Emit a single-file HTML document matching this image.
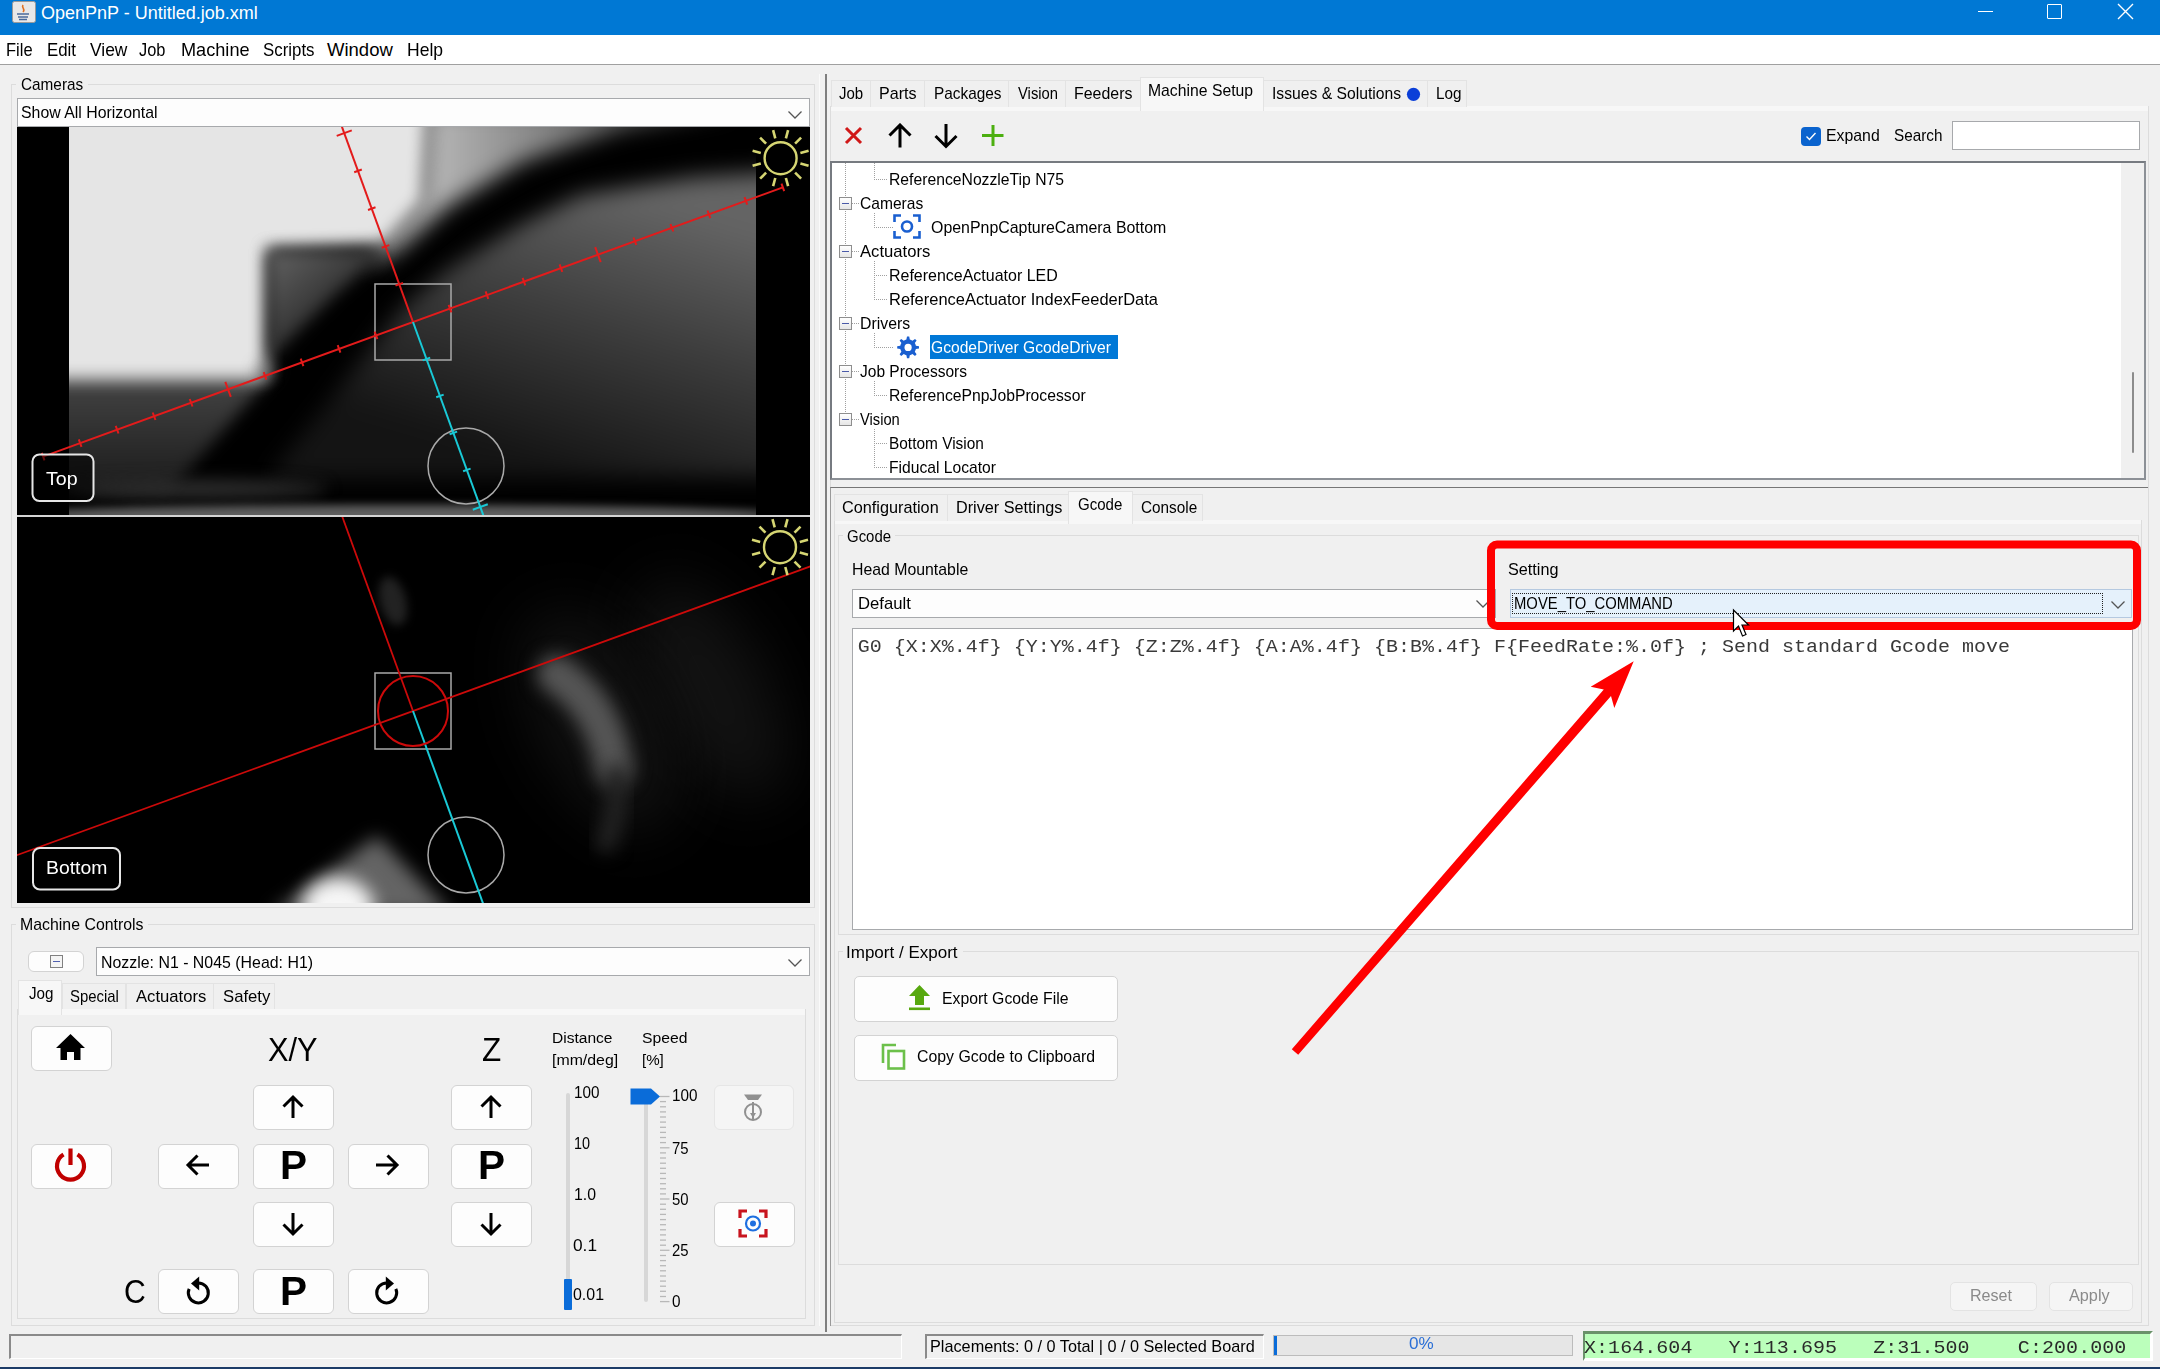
<!DOCTYPE html><html><head><meta charset="utf-8"><style>
html,body{margin:0;padding:0;width:2160px;height:1369px;overflow:hidden;background:#F0F0F0;position:relative}
.t{position:absolute;white-space:pre;line-height:normal}
</style></head><body>
<div style="position:absolute;left:0px;top:0px;width:2160px;height:1369px;background:#F0F0F0"></div>
<div style="position:absolute;left:0px;top:0px;width:2160px;height:35px;background:#0078D4"></div>
<div style="position:absolute;left:0px;top:35px;width:2160px;height:29px;background:#fff"></div>
<div style="position:absolute;left:0px;top:64px;width:2160px;height:1px;background:#A0A0A0"></div>
<div class="t" style="left:41px;top:3.21px;font-size:18px;color:#fff;font-family:'Liberation Sans', sans-serif;">OpenPnP - Untitled.job.xml</div>
<svg style="position:absolute;left:12px;top:1px" width="24" height="22" viewBox="0 0 24 22"><rect x="0.5" y="0.5" width="23" height="21" rx="2" fill="#e8e8e8" stroke="#9a9a9a"/><path d="M11 4 C9 7 14 8 11 11" stroke="#e07020" stroke-width="1.6" fill="none"/><path d="M5 13 h12 M6 16 h10 M7 18.5 h8" stroke="#4a6a9a" stroke-width="1.4"/></svg>
<div style="position:absolute;left:1978px;top:11px;width:15px;height:1px;background:#fff"></div>
<div style="position:absolute;left:2047px;top:4px;width:15px;height:15px;border:1.3px solid #fff;box-sizing:border-box;border-radius:1px"></div>
<svg style="position:absolute;left:2117px;top:3px" width="18" height="18" viewBox="0 0 18 18"><path d="M1 1 L16 16 M16 1 L1 16" stroke="#fff" stroke-width="1.4"/></svg>
<div class="t" style="left:6.00px;top:39.26px;font-size:18.5px;color:#000;font-family:'Liberation Sans', sans-serif;transform:scaleX(0.8908);transform-origin:0 0;">File</div>
<div class="t" style="left:47.00px;top:39.26px;font-size:18.5px;color:#000;font-family:'Liberation Sans', sans-serif;transform:scaleX(0.9098);transform-origin:0 0;">Edit</div>
<div class="t" style="left:90.00px;top:39.26px;font-size:18.5px;color:#000;font-family:'Liberation Sans', sans-serif;transform:scaleX(0.9404);transform-origin:0 0;">View</div>
<div class="t" style="left:139.00px;top:39.26px;font-size:18.5px;color:#000;font-family:'Liberation Sans', sans-serif;transform:scaleX(0.8870);transform-origin:0 0;">Job</div>
<div class="t" style="left:180.50px;top:39.26px;font-size:18.5px;color:#000;font-family:'Liberation Sans', sans-serif;transform:scaleX(0.9803);transform-origin:0 0;">Machine</div>
<div class="t" style="left:262.50px;top:39.26px;font-size:18.5px;color:#000;font-family:'Liberation Sans', sans-serif;transform:scaleX(0.9115);transform-origin:0 0;">Scripts</div>
<div class="t" style="left:327.00px;top:39.26px;font-size:18.5px;color:#000;font-family:'Liberation Sans', sans-serif;transform:scaleX(1.0000);transform-origin:0 0;">Window</div>
<div class="t" style="left:407.00px;top:39.26px;font-size:18.5px;color:#000;font-family:'Liberation Sans', sans-serif;transform:scaleX(0.9474);transform-origin:0 0;">Help</div>
<div style="position:absolute;left:11px;top:84px;width:804px;height:824px;border:1px solid #DCDCDC;box-sizing:border-box"></div>
<div style="position:absolute;left:16px;top:74px;width:72px;height:20px;background:#F0F0F0"></div>
<div class="t" style="left:20.60px;top:74.71px;font-size:17px;color:#000;font-family:'Liberation Sans', sans-serif;transform:scaleX(0.9014);transform-origin:0 0;">Cameras</div>
<div style="position:absolute;left:17px;top:98px;width:793px;height:29px;background:#FDFDFD;border:1px solid #A7A9AC;box-sizing:border-box"></div>
<div class="t" style="left:21.40px;top:102.91px;font-size:17px;color:#000;font-family:'Liberation Sans', sans-serif;transform:scaleX(0.9324);transform-origin:0 0;">Show All Horizontal</div>
<svg style="position:absolute;left:786px;top:109px" width="18" height="12" viewBox="0 0 18 12"><path d="M2.5 2.5 L9 9 L15.5 2.5" stroke="#555" stroke-width="1.3" fill="none"/></svg>
<svg style="position:absolute;left:17px;top:127px" width="793" height="388" viewBox="17 127 793 388">
<defs>
<filter id="b4" color-interpolation-filters="sRGB" x="-150%" y="-150%" width="400%" height="400%"><feGaussianBlur stdDeviation="4"/></filter>
<filter id="b8" color-interpolation-filters="sRGB" x="-150%" y="-150%" width="400%" height="400%"><feGaussianBlur stdDeviation="8"/></filter>
<filter id="b11" color-interpolation-filters="sRGB" x="-150%" y="-150%" width="400%" height="400%"><feGaussianBlur stdDeviation="11"/></filter>
<filter id="b14" color-interpolation-filters="sRGB" x="-150%" y="-150%" width="400%" height="400%"><feGaussianBlur stdDeviation="14"/></filter>
<filter id="b22" color-interpolation-filters="sRGB" x="-150%" y="-150%" width="400%" height="400%"><feGaussianBlur stdDeviation="22"/></filter>
<linearGradient id="gR" gradientUnits="userSpaceOnUse" x1="620" y1="70" x2="540" y2="345"><stop offset="0" stop-color="#646464"/><stop offset="0.45" stop-color="#3E3E3E"/><stop offset="1" stop-color="#141414"/></linearGradient>
<linearGradient id="gL" gradientUnits="userSpaceOnUse" x1="0" y1="250" x2="0" y2="360"><stop offset="0" stop-color="#444"/><stop offset="1" stop-color="#1c1c1c"/></linearGradient>
<linearGradient id="gN" gradientUnits="userSpaceOnUse" x1="255" y1="125" x2="320" y2="200"><stop offset="0" stop-color="#626262"/><stop offset="1" stop-color="#262626"/></linearGradient>
<linearGradient id="gT" gradientUnits="userSpaceOnUse" x1="400" y1="0" x2="620" y2="0"><stop offset="0" stop-color="#BDBDBD"/><stop offset="1" stop-color="#5A5A5A"/></linearGradient>
<clipPath id="cT"><rect x="17" y="127" width="793" height="388"/></clipPath>
</defs>
<g clip-path="url(#cT)">
<rect x="17" y="127" width="793" height="388" fill="#000"/>
<g transform="translate(17,127)">
<polygon points="10,240 262,240 152,365 10,365" fill="url(#gL)" filter="url(#b8)"/>
<polygon points="386,180 431,142 505,97 564,68 678,50 770,44 770,350 250,352" fill="url(#gR)" filter="url(#b11)"/>
<polygon points="380,-20 720,-20 603,2 505,35 431,79 379,124 350,140 364,118 404,74 409,-20" fill="url(#gT)" filter="url(#b11)"/>
<polygon points="10,-20 411,-20 406,74 366,118 250,122 250,253 10,253" fill="#E5E5E5" filter="url(#b8)"/>
<polygon points="250,122 372,122 318,168 238,246 250,251" fill="url(#gN)" filter="url(#b8)"/>
<ellipse cx="180" cy="362" rx="130" ry="9" fill="#2e2e2e" filter="url(#b8)"/>
<ellipse cx="380" cy="388" rx="390" ry="10" fill="#606060" filter="url(#b4)"/>
<rect x="0" y="0" width="52" height="388" fill="#000"/>
<rect x="739" y="0" width="54" height="388" fill="#000"/>
</g>
<rect x="375" y="284" width="76" height="76" fill="none" stroke="#A9A9A9" stroke-width="1.5"/><circle cx="466" cy="466" r="38" fill="none" stroke="#A9A9A9" stroke-width="1.5"/><line x1="43.1" y1="456.6" x2="782.9" y2="187.4" stroke="#E31B1B" stroke-width="2"/><line x1="44.5" y1="460.4" x2="41.8" y2="452.9" stroke="#E31B1B" stroke-width="2"/><line x1="81.5" y1="446.9" x2="78.8" y2="439.4" stroke="#E31B1B" stroke-width="2"/><line x1="118.5" y1="433.5" x2="115.7" y2="425.9" stroke="#E31B1B" stroke-width="2"/><line x1="155.5" y1="420.0" x2="152.7" y2="412.5" stroke="#E31B1B" stroke-width="2"/><line x1="192.5" y1="406.5" x2="189.7" y2="399.0" stroke="#E31B1B" stroke-width="2"/><line x1="230.8" y1="396.8" x2="225.3" y2="381.8" stroke="#E31B1B" stroke-width="2"/><line x1="266.4" y1="379.6" x2="263.7" y2="372.1" stroke="#E31B1B" stroke-width="2"/><line x1="303.4" y1="366.1" x2="300.7" y2="358.6" stroke="#E31B1B" stroke-width="2"/><line x1="340.4" y1="352.7" x2="337.7" y2="345.2" stroke="#E31B1B" stroke-width="2"/><line x1="377.4" y1="339.2" x2="374.6" y2="331.7" stroke="#E31B1B" stroke-width="2"/><line x1="451.4" y1="312.3" x2="448.6" y2="304.8" stroke="#E31B1B" stroke-width="2"/><line x1="488.3" y1="298.8" x2="485.6" y2="291.3" stroke="#E31B1B" stroke-width="2"/><line x1="525.3" y1="285.4" x2="522.6" y2="277.9" stroke="#E31B1B" stroke-width="2"/><line x1="562.3" y1="271.9" x2="559.6" y2="264.4" stroke="#E31B1B" stroke-width="2"/><line x1="600.7" y1="262.2" x2="595.2" y2="247.2" stroke="#E31B1B" stroke-width="2"/><line x1="636.3" y1="245.0" x2="633.5" y2="237.5" stroke="#E31B1B" stroke-width="2"/><line x1="673.3" y1="231.5" x2="670.5" y2="224.0" stroke="#E31B1B" stroke-width="2"/><line x1="710.3" y1="218.1" x2="707.5" y2="210.5" stroke="#E31B1B" stroke-width="2"/><line x1="747.2" y1="204.6" x2="744.5" y2="197.1" stroke="#E31B1B" stroke-width="2"/><line x1="784.2" y1="191.1" x2="781.5" y2="183.6" stroke="#E31B1B" stroke-width="2"/><line x1="413.0" y1="322.0" x2="340.1" y2="121.8" stroke="#E31B1B" stroke-width="2"/><line x1="395.5" y1="285.6" x2="403.0" y2="282.9" stroke="#E31B1B" stroke-width="2"/><line x1="381.7" y1="247.8" x2="389.3" y2="245.1" stroke="#E31B1B" stroke-width="2"/><line x1="368.0" y1="210.0" x2="375.5" y2="207.3" stroke="#E31B1B" stroke-width="2"/><line x1="354.2" y1="172.3" x2="361.8" y2="169.5" stroke="#E31B1B" stroke-width="2"/><line x1="336.7" y1="135.9" x2="351.8" y2="130.4" stroke="#E31B1B" stroke-width="2"/><line x1="413.0" y1="322.0" x2="487.0" y2="525.4" stroke="#19C9D6" stroke-width="2"/><line x1="422.7" y1="360.4" x2="430.2" y2="357.6" stroke="#19C9D6" stroke-width="2"/><line x1="436.2" y1="397.3" x2="443.7" y2="394.6" stroke="#19C9D6" stroke-width="2"/><line x1="449.6" y1="434.3" x2="457.1" y2="431.6" stroke="#19C9D6" stroke-width="2"/><line x1="463.1" y1="471.3" x2="470.6" y2="468.6" stroke="#19C9D6" stroke-width="2"/><line x1="472.8" y1="509.7" x2="487.8" y2="504.2" stroke="#19C9D6" stroke-width="2"/><circle cx="780.6" cy="158.2" r="16" stroke="#D6D673" stroke-width="2.4" fill="none"/><line x1="800.4" y1="163.5" x2="808.6" y2="165.7" stroke="#D6D673" stroke-width="2.6"/><line x1="795.1" y1="172.7" x2="801.1" y2="178.7" stroke="#D6D673" stroke-width="2.6"/><line x1="785.9" y1="178.0" x2="788.1" y2="186.2" stroke="#D6D673" stroke-width="2.6"/><line x1="775.3" y1="178.0" x2="773.1" y2="186.2" stroke="#D6D673" stroke-width="2.6"/><line x1="766.1" y1="172.7" x2="760.1" y2="178.7" stroke="#D6D673" stroke-width="2.6"/><line x1="760.8" y1="163.5" x2="752.6" y2="165.7" stroke="#D6D673" stroke-width="2.6"/><line x1="760.8" y1="152.9" x2="752.6" y2="150.7" stroke="#D6D673" stroke-width="2.6"/><line x1="766.1" y1="143.7" x2="760.1" y2="137.7" stroke="#D6D673" stroke-width="2.6"/><line x1="775.3" y1="138.4" x2="773.1" y2="130.2" stroke="#D6D673" stroke-width="2.6"/><line x1="785.9" y1="138.4" x2="788.1" y2="130.2" stroke="#D6D673" stroke-width="2.6"/><line x1="795.1" y1="143.7" x2="801.1" y2="137.7" stroke="#D6D673" stroke-width="2.6"/><line x1="800.4" y1="152.9" x2="808.6" y2="150.7" stroke="#D6D673" stroke-width="2.6"/><rect x="32.5" y="454.5" width="61" height="46.5" rx="7" fill="rgba(0,0,0,0.55)" stroke="#E6E6E6" stroke-width="2"/></g></svg>
<div class="t" style="left:46.40px;top:467.81px;font-size:19px;color:#fff;font-family:'Liberation Sans', sans-serif;transform:scaleX(1.0318);transform-origin:0 0;">Top</div>
<div style="position:absolute;left:17px;top:515px;width:793px;height:2px;background:#D4D4D4"></div>
<svg style="position:absolute;left:17px;top:517px" width="793" height="386" viewBox="17 517 793 386">
<defs>
<filter id="c5" color-interpolation-filters="sRGB" x="-150%" y="-150%" width="400%" height="400%"><feGaussianBlur stdDeviation="5"/></filter>
<filter id="c9" color-interpolation-filters="sRGB" x="-150%" y="-150%" width="400%" height="400%"><feGaussianBlur stdDeviation="9"/></filter>
<filter id="c30" color-interpolation-filters="sRGB" x="-150%" y="-150%" width="400%" height="400%"><feGaussianBlur stdDeviation="30"/></filter>
<clipPath id="cB"><rect x="17" y="517" width="793" height="386"/></clipPath>
</defs>
<g clip-path="url(#cB)">
<rect x="17" y="517" width="793" height="386" fill="#000"/>
<ellipse cx="712" cy="690" rx="55" ry="120" transform="rotate(-28 712 690)" fill="#121212" filter="url(#c30)"/>
<ellipse cx="393" cy="601" rx="13" ry="25" transform="rotate(-15 393 601)" fill="#222" filter="url(#c5)"/>
<ellipse cx="600" cy="720" rx="60" ry="120" transform="rotate(-27 600 720)" fill="#111" filter="url(#c30)"/>
<path d="M556 674 Q604 705 614 768" stroke="#555" stroke-width="38" stroke-linecap="round" fill="none" filter="url(#c9)"/>
<path d="M616 775 Q620 810 606 842" stroke="#222" stroke-width="22" stroke-linecap="round" fill="none" filter="url(#c9)"/>
<polygon points="270,915 377,836 452,915" fill="#646464" filter="url(#c9)"/>
<ellipse cx="338" cy="908" rx="36" ry="30" fill="#F6F6F6" filter="url(#c9)"/>
<rect x="375" y="673" width="76" height="76" fill="none" stroke="#A9A9A9" stroke-width="1.5"/><circle cx="466" cy="855" r="38" fill="none" stroke="#A9A9A9" stroke-width="1.5"/><line x1="8.9" y1="858.1" x2="817.1" y2="563.9" stroke="#CC0A0A" stroke-width="1.8"/><line x1="413.0" y1="711.0" x2="339.5" y2="509.0" stroke="#CC0A0A" stroke-width="1.8"/><line x1="413.0" y1="711.0" x2="486.5" y2="913.0" stroke="#19C9D6" stroke-width="2"/><circle cx="413" cy="711" r="35" fill="none" stroke="#CC0A0A" stroke-width="2"/><circle cx="780" cy="547.2" r="16" stroke="#D6D673" stroke-width="2.4" fill="none"/><line x1="799.8" y1="552.5" x2="808.0" y2="554.7" stroke="#D6D673" stroke-width="2.6"/><line x1="794.5" y1="561.7" x2="800.5" y2="567.7" stroke="#D6D673" stroke-width="2.6"/><line x1="785.3" y1="567.0" x2="787.5" y2="575.2" stroke="#D6D673" stroke-width="2.6"/><line x1="774.7" y1="567.0" x2="772.5" y2="575.2" stroke="#D6D673" stroke-width="2.6"/><line x1="765.5" y1="561.7" x2="759.5" y2="567.7" stroke="#D6D673" stroke-width="2.6"/><line x1="760.2" y1="552.5" x2="752.0" y2="554.7" stroke="#D6D673" stroke-width="2.6"/><line x1="760.2" y1="541.9" x2="752.0" y2="539.7" stroke="#D6D673" stroke-width="2.6"/><line x1="765.5" y1="532.7" x2="759.5" y2="526.7" stroke="#D6D673" stroke-width="2.6"/><line x1="774.7" y1="527.4" x2="772.5" y2="519.2" stroke="#D6D673" stroke-width="2.6"/><line x1="785.3" y1="527.4" x2="787.5" y2="519.2" stroke="#D6D673" stroke-width="2.6"/><line x1="794.5" y1="532.7" x2="800.5" y2="526.7" stroke="#D6D673" stroke-width="2.6"/><line x1="799.8" y1="541.9" x2="808.0" y2="539.7" stroke="#D6D673" stroke-width="2.6"/><rect x="33" y="848" width="87" height="41.5" rx="7" fill="rgba(0,0,0,0.6)" stroke="#E6E6E6" stroke-width="2"/></g></svg>
<div class="t" style="left:45.60px;top:856.50px;font-size:19px;color:#fff;font-family:'Liberation Sans', sans-serif;transform:scaleX(1.0191);transform-origin:0 0;">Bottom</div>
<div style="position:absolute;left:11px;top:924px;width:804px;height:402px;border:1px solid #DCDCDC;box-sizing:border-box"></div>
<div style="position:absolute;left:16px;top:914px;width:132px;height:20px;background:#F0F0F0"></div>
<div class="t" style="left:19.50px;top:915.32px;font-size:17px;color:#000;font-family:'Liberation Sans', sans-serif;transform:scaleX(0.9338);transform-origin:0 0;">Machine Controls</div>
<div style="position:absolute;left:28px;top:951px;width:56px;height:21px;background:#FDFDFD;border:1px solid #D3D3D3;box-sizing:border-box;border-radius:5px;border-radius:6px"></div>
<div style="position:absolute;left:50px;top:955px;width:13px;height:13px;border:1.3px solid #808080;box-sizing:border-box;background:#F4F4F4"></div>
<div style="position:absolute;left:53px;top:961px;width:7px;height:1.3px;background:#5060B0"></div>
<div style="position:absolute;left:96px;top:947px;width:714px;height:29px;background:#FDFDFD;border:1px solid #A7A9AC;box-sizing:border-box"></div>
<div class="t" style="left:101.00px;top:952.51px;font-size:17px;color:#000;font-family:'Liberation Sans', sans-serif;transform:scaleX(0.9350);transform-origin:0 0;">Nozzle: N1 - N045 (Head: H1)</div>
<svg style="position:absolute;left:786px;top:957px" width="18" height="12" viewBox="0 0 18 12"><path d="M2.5 2.5 L9 9 L15.5 2.5" stroke="#555" stroke-width="1.3" fill="none"/></svg>
<div style="position:absolute;left:17px;top:1009px;width:789px;height:310px;border:1px solid #DCDCDC;box-sizing:border-box"></div>
<div style="position:absolute;left:18px;top:1009px;width:787px;height:6px;background:#F7F7F7"></div>
<div style="position:absolute;left:62px;top:983px;width:64px;height:26px;background:#F0F0F0;border:1px solid #E3E3E3;border-bottom:none;box-sizing:border-box"></div>
<div style="position:absolute;left:126px;top:983px;width:88px;height:26px;background:#F0F0F0;border:1px solid #E3E3E3;border-bottom:none;box-sizing:border-box"></div>
<div style="position:absolute;left:213px;top:983px;width:62px;height:26px;background:#F0F0F0;border:1px solid #E3E3E3;border-bottom:none;box-sizing:border-box"></div>
<div style="position:absolute;left:18px;top:980px;width:44px;height:35px;background:#F7F7F7;border:1px solid #E3E3E3;border-bottom:none;box-sizing:border-box"></div>
<div class="t" style="left:28.50px;top:983.62px;font-size:17px;color:#000;font-family:'Liberation Sans', sans-serif;transform:scaleX(0.8950);transform-origin:0 0;">Jog</div>
<div class="t" style="left:70.00px;top:986.82px;font-size:17px;color:#000;font-family:'Liberation Sans', sans-serif;transform:scaleX(0.8771);transform-origin:0 0;">Special</div>
<div class="t" style="left:136.00px;top:986.82px;font-size:17px;color:#000;font-family:'Liberation Sans', sans-serif;transform:scaleX(0.9781);transform-origin:0 0;">Actuators</div>
<div class="t" style="left:222.60px;top:986.82px;font-size:17px;color:#000;font-family:'Liberation Sans', sans-serif;transform:scaleX(0.9824);transform-origin:0 0;">Safety</div>
<div style="position:absolute;left:31px;top:1026px;width:81px;height:45px;background:#FDFDFD;border:1px solid #D3D3D3;box-sizing:border-box;border-radius:5px;border-radius:6px"></div>
<div style="position:absolute;left:31px;top:1144px;width:81px;height:45px;background:#FDFDFD;border:1px solid #D3D3D3;box-sizing:border-box;border-radius:5px;border-radius:6px"></div>
<div style="position:absolute;left:253px;top:1085px;width:81px;height:45px;background:#FDFDFD;border:1px solid #D3D3D3;box-sizing:border-box;border-radius:5px;border-radius:6px"></div>
<div style="position:absolute;left:158px;top:1144px;width:81px;height:45px;background:#FDFDFD;border:1px solid #D3D3D3;box-sizing:border-box;border-radius:5px;border-radius:6px"></div>
<div style="position:absolute;left:253px;top:1144px;width:81px;height:45px;background:#FDFDFD;border:1px solid #D3D3D3;box-sizing:border-box;border-radius:5px;border-radius:6px"></div>
<div style="position:absolute;left:348px;top:1144px;width:81px;height:45px;background:#FDFDFD;border:1px solid #D3D3D3;box-sizing:border-box;border-radius:5px;border-radius:6px"></div>
<div style="position:absolute;left:253px;top:1202px;width:81px;height:45px;background:#FDFDFD;border:1px solid #D3D3D3;box-sizing:border-box;border-radius:5px;border-radius:6px"></div>
<div style="position:absolute;left:158px;top:1269px;width:81px;height:45px;background:#FDFDFD;border:1px solid #D3D3D3;box-sizing:border-box;border-radius:5px;border-radius:6px"></div>
<div style="position:absolute;left:253px;top:1269px;width:81px;height:45px;background:#FDFDFD;border:1px solid #D3D3D3;box-sizing:border-box;border-radius:5px;border-radius:6px"></div>
<div style="position:absolute;left:348px;top:1269px;width:81px;height:45px;background:#FDFDFD;border:1px solid #D3D3D3;box-sizing:border-box;border-radius:5px;border-radius:6px"></div>
<div style="position:absolute;left:451px;top:1085px;width:81px;height:45px;background:#FDFDFD;border:1px solid #D3D3D3;box-sizing:border-box;border-radius:5px;border-radius:6px"></div>
<div style="position:absolute;left:451px;top:1144px;width:81px;height:45px;background:#FDFDFD;border:1px solid #D3D3D3;box-sizing:border-box;border-radius:5px;border-radius:6px"></div>
<div style="position:absolute;left:451px;top:1202px;width:81px;height:45px;background:#FDFDFD;border:1px solid #D3D3D3;box-sizing:border-box;border-radius:5px;border-radius:6px"></div>
<div style="position:absolute;left:714px;top:1202px;width:81px;height:45px;background:#FDFDFD;border:1px solid #D3D3D3;box-sizing:border-box;border-radius:5px;border-radius:6px"></div>
<div style="position:absolute;left:714px;top:1085px;width:80px;height:45px;background:#F5F5F5;border:1px solid #E6E6E6;box-sizing:border-box;border-radius:6px"></div>
<div class="t" style="left:267.80px;top:1030.84px;font-size:33px;color:#000;font-family:'Liberation Sans', sans-serif;transform:scaleX(0.9315);transform-origin:0 0;">X/Y</div>
<div class="t" style="left:481.50px;top:1031.43px;font-size:33px;color:#000;font-family:'Liberation Sans', sans-serif;transform:scaleX(0.9540);transform-origin:0 0;">Z</div>
<div class="t" style="left:124.00px;top:1273.04px;font-size:33px;color:#000;font-family:'Liberation Sans', sans-serif;transform:scaleX(0.9131);transform-origin:0 0;">C</div>
<div class="t" style="left:279.50px;top:1143.10px;font-size:40px;color:#000;font-family:'Liberation Sans', sans-serif;transform:scaleX(1.0141);transform-origin:0 0;font-weight:bold;">P</div>
<div class="t" style="left:477.70px;top:1143.10px;font-size:40px;color:#000;font-family:'Liberation Sans', sans-serif;transform:scaleX(1.0141);transform-origin:0 0;font-weight:bold;">P</div>
<div class="t" style="left:279.50px;top:1268.70px;font-size:40px;color:#000;font-family:'Liberation Sans', sans-serif;transform:scaleX(1.0141);transform-origin:0 0;font-weight:bold;">P</div>
<svg style="position:absolute;left:279.5px;top:1093.5px" width="26" height="26" viewBox="0 0 26 26"><path d="M13 24 V3 M3.5 12.5 L13 3 L22.5 12.5" stroke="#000" stroke-width="3" fill="none" stroke-linecap="butt" stroke-linejoin="miter"/></svg>
<svg style="position:absolute;left:477.5px;top:1093.5px" width="26" height="26" viewBox="0 0 26 26"><path d="M13 24 V3 M3.5 12.5 L13 3 L22.5 12.5" stroke="#000" stroke-width="3" fill="none" stroke-linecap="butt" stroke-linejoin="miter"/></svg>
<svg style="position:absolute;left:279.5px;top:1210.5px" width="26" height="26" viewBox="0 0 26 26"><path d="M13 2 V23 M3.5 13.5 L13 23 L22.5 13.5" stroke="#000" stroke-width="3" fill="none" stroke-linecap="butt" stroke-linejoin="miter"/></svg>
<svg style="position:absolute;left:477.5px;top:1210.5px" width="26" height="26" viewBox="0 0 26 26"><path d="M13 2 V23 M3.5 13.5 L13 23 L22.5 13.5" stroke="#000" stroke-width="3" fill="none" stroke-linecap="butt" stroke-linejoin="miter"/></svg>
<svg style="position:absolute;left:185px;top:1152px" width="26" height="26" viewBox="0 0 26 26"><path d="M24 13 H3 M12.5 3.5 L3 13 L12.5 22.5" stroke="#000" stroke-width="3" fill="none" stroke-linecap="butt" stroke-linejoin="miter"/></svg>
<svg style="position:absolute;left:374px;top:1152px" width="26" height="26" viewBox="0 0 26 26"><path d="M2 13 H23 M13.5 3.5 L23 13 L13.5 22.5" stroke="#000" stroke-width="3" fill="none" stroke-linecap="butt" stroke-linejoin="miter"/></svg>
<svg style="position:absolute;left:55px;top:1033px" width="31" height="28" viewBox="0 0 31 28"><path d="M15.5 1 L1 15 H5.5 V27 H12 V19 H19 V27 H25.5 V15 H30 Z" fill="#000"/></svg>
<svg style="position:absolute;left:52px;top:1146px" width="37" height="38" viewBox="0 0 37 38"><path d="M11.5 8.5 A13.5 13.5 0 1 0 25.5 8.5" stroke="#C00000" stroke-width="4.2" fill="none"/><path d="M18.5 2.5 V19" stroke="#C00000" stroke-width="4.2"/></svg>
<svg style="position:absolute;left:184px;top:1274px" width="30" height="32" viewBox="0 0 30 32"><path d="M14.3 8.9 A10 10 0 1 1 5.15 14.9" stroke="#000" stroke-width="3" fill="none"/><path d="M7 9.6 L15.2 2.6 L15.2 16.4 Z" fill="#000"/></svg>
<svg style="position:absolute;left:370.5px;top:1274px" width="30" height="32" viewBox="0 0 30 32"><g transform="translate(30,0) scale(-1,1)"><path d="M14.3 8.9 A10 10 0 1 1 5.15 14.9" stroke="#000" stroke-width="3" fill="none"/><path d="M7 9.6 L15.2 2.6 L15.2 16.4 Z" fill="#000"/></g></svg>
<svg style="position:absolute;left:742px;top:1093px" width="22" height="30" viewBox="0 0 22 30"><path d="M2 1.5 H20 L16 7 H6 Z" fill="#909090"/><circle cx="11" cy="19" r="8" stroke="#909090" stroke-width="2" fill="none"/><path d="M11 9 V26" stroke="#909090" stroke-width="2"/><path d="M8 20 L11 25 L14 20" fill="#909090"/></svg>
<svg style="position:absolute;left:738px;top:1209px" width="30" height="29" viewBox="0 0 30 29"><path d="M2 9 V2 H9 M21 2 H28 V9 M28 20 V27 H21 M9 27 H2 V20" stroke="#C8141E" stroke-width="3.2" fill="none"/><circle cx="15" cy="14.5" r="7" stroke="#1E6FE0" stroke-width="2.2" fill="none"/><circle cx="15" cy="14.5" r="3" fill="#1E6FE0"/></svg>
<div class="t" style="left:552.40px;top:1029.37px;font-size:15.5px;color:#000;font-family:'Liberation Sans', sans-serif;transform:scaleX(1.0025);transform-origin:0 0;">Distance</div>
<div class="t" style="left:552.40px;top:1051.37px;font-size:15.5px;color:#000;font-family:'Liberation Sans', sans-serif;transform:scaleX(1.0244);transform-origin:0 0;">[mm/deg]</div>
<div class="t" style="left:642.00px;top:1029.37px;font-size:15.5px;color:#000;font-family:'Liberation Sans', sans-serif;transform:scaleX(1.0139);transform-origin:0 0;">Speed</div>
<div class="t" style="left:642.00px;top:1051.37px;font-size:15.5px;color:#000;font-family:'Liberation Sans', sans-serif;transform:scaleX(0.9743);transform-origin:0 0;">[%]</div>
<div style="position:absolute;left:566px;top:1093px;width:4px;height:216px;background:#D7D7D7;border-radius:2px"></div>
<div style="position:absolute;left:564px;top:1279px;width:8px;height:31px;background:#0A6CD9;border-radius:1px"></div>
<div class="t" style="left:574.00px;top:1084.02px;font-size:16px;color:#000;font-family:'Liberation Sans', sans-serif;transform:scaleX(0.9533);transform-origin:0 0;">100</div>
<div class="t" style="left:574.00px;top:1135.02px;font-size:16px;color:#000;font-family:'Liberation Sans', sans-serif;transform:scaleX(0.9014);transform-origin:0 0;">10</div>
<div class="t" style="left:574.00px;top:1185.92px;font-size:16px;color:#000;font-family:'Liberation Sans', sans-serif;transform:scaleX(0.9888);transform-origin:0 0;">1.0</div>
<div class="t" style="left:572.50px;top:1236.92px;font-size:16px;color:#000;font-family:'Liberation Sans', sans-serif;transform:scaleX(1.0787);transform-origin:0 0;">0.1</div>
<div class="t" style="left:572.50px;top:1285.82px;font-size:16px;color:#000;font-family:'Liberation Sans', sans-serif;transform:scaleX(0.9960);transform-origin:0 0;">0.01</div>
<div style="position:absolute;left:644px;top:1097px;width:4px;height:205px;background:#D7D7D7;border-radius:2px"></div>
<svg style="position:absolute;left:630px;top:1088px" width="31" height="17" viewBox="0 0 31 17"><path d="M0.5 0.5 H21 L30 8.5 L21 16.5 H0.5 Z" fill="#0A6CD9"/></svg>
<svg style="position:absolute;left:0;top:0" width="700" height="1369" viewBox="0 0 700 1369"><line x1="660" y1="1096.5" x2="669.5" y2="1096.5" stroke="#B8B8B8" stroke-width="1.3"/><line x1="660" y1="1101.6" x2="666" y2="1101.6" stroke="#B8B8B8" stroke-width="1.3"/><line x1="660" y1="1106.8" x2="666" y2="1106.8" stroke="#B8B8B8" stroke-width="1.3"/><line x1="660" y1="1111.9" x2="666" y2="1111.9" stroke="#B8B8B8" stroke-width="1.3"/><line x1="660" y1="1117.0" x2="666" y2="1117.0" stroke="#B8B8B8" stroke-width="1.3"/><line x1="660" y1="1122.1" x2="666" y2="1122.1" stroke="#B8B8B8" stroke-width="1.3"/><line x1="660" y1="1127.3" x2="666" y2="1127.3" stroke="#B8B8B8" stroke-width="1.3"/><line x1="660" y1="1132.4" x2="666" y2="1132.4" stroke="#B8B8B8" stroke-width="1.3"/><line x1="660" y1="1137.5" x2="666" y2="1137.5" stroke="#B8B8B8" stroke-width="1.3"/><line x1="660" y1="1142.6" x2="666" y2="1142.6" stroke="#B8B8B8" stroke-width="1.3"/><line x1="660" y1="1147.8" x2="669.5" y2="1147.8" stroke="#B8B8B8" stroke-width="1.3"/><line x1="660" y1="1152.9" x2="666" y2="1152.9" stroke="#B8B8B8" stroke-width="1.3"/><line x1="660" y1="1158.0" x2="666" y2="1158.0" stroke="#B8B8B8" stroke-width="1.3"/><line x1="660" y1="1163.2" x2="666" y2="1163.2" stroke="#B8B8B8" stroke-width="1.3"/><line x1="660" y1="1168.3" x2="666" y2="1168.3" stroke="#B8B8B8" stroke-width="1.3"/><line x1="660" y1="1173.4" x2="666" y2="1173.4" stroke="#B8B8B8" stroke-width="1.3"/><line x1="660" y1="1178.5" x2="666" y2="1178.5" stroke="#B8B8B8" stroke-width="1.3"/><line x1="660" y1="1183.7" x2="666" y2="1183.7" stroke="#B8B8B8" stroke-width="1.3"/><line x1="660" y1="1188.8" x2="666" y2="1188.8" stroke="#B8B8B8" stroke-width="1.3"/><line x1="660" y1="1193.9" x2="666" y2="1193.9" stroke="#B8B8B8" stroke-width="1.3"/><line x1="660" y1="1199.0" x2="669.5" y2="1199.0" stroke="#B8B8B8" stroke-width="1.3"/><line x1="660" y1="1204.2" x2="666" y2="1204.2" stroke="#B8B8B8" stroke-width="1.3"/><line x1="660" y1="1209.3" x2="666" y2="1209.3" stroke="#B8B8B8" stroke-width="1.3"/><line x1="660" y1="1214.4" x2="666" y2="1214.4" stroke="#B8B8B8" stroke-width="1.3"/><line x1="660" y1="1219.6" x2="666" y2="1219.6" stroke="#B8B8B8" stroke-width="1.3"/><line x1="660" y1="1224.7" x2="666" y2="1224.7" stroke="#B8B8B8" stroke-width="1.3"/><line x1="660" y1="1229.8" x2="666" y2="1229.8" stroke="#B8B8B8" stroke-width="1.3"/><line x1="660" y1="1234.9" x2="666" y2="1234.9" stroke="#B8B8B8" stroke-width="1.3"/><line x1="660" y1="1240.1" x2="666" y2="1240.1" stroke="#B8B8B8" stroke-width="1.3"/><line x1="660" y1="1245.2" x2="666" y2="1245.2" stroke="#B8B8B8" stroke-width="1.3"/><line x1="660" y1="1250.3" x2="669.5" y2="1250.3" stroke="#B8B8B8" stroke-width="1.3"/><line x1="660" y1="1255.5" x2="666" y2="1255.5" stroke="#B8B8B8" stroke-width="1.3"/><line x1="660" y1="1260.6" x2="666" y2="1260.6" stroke="#B8B8B8" stroke-width="1.3"/><line x1="660" y1="1265.7" x2="666" y2="1265.7" stroke="#B8B8B8" stroke-width="1.3"/><line x1="660" y1="1270.8" x2="666" y2="1270.8" stroke="#B8B8B8" stroke-width="1.3"/><line x1="660" y1="1276.0" x2="666" y2="1276.0" stroke="#B8B8B8" stroke-width="1.3"/><line x1="660" y1="1281.1" x2="666" y2="1281.1" stroke="#B8B8B8" stroke-width="1.3"/><line x1="660" y1="1286.2" x2="666" y2="1286.2" stroke="#B8B8B8" stroke-width="1.3"/><line x1="660" y1="1291.3" x2="666" y2="1291.3" stroke="#B8B8B8" stroke-width="1.3"/><line x1="660" y1="1296.5" x2="666" y2="1296.5" stroke="#B8B8B8" stroke-width="1.3"/><line x1="660" y1="1301.6" x2="669.5" y2="1301.6" stroke="#B8B8B8" stroke-width="1.3"/></svg>
<div class="t" style="left:672.00px;top:1087.02px;font-size:16px;color:#000;font-family:'Liberation Sans', sans-serif;transform:scaleX(0.9533);transform-origin:0 0;">100</div>
<div class="t" style="left:672.00px;top:1139.82px;font-size:16px;color:#000;font-family:'Liberation Sans', sans-serif;transform:scaleX(0.9296);transform-origin:0 0;">75</div>
<div class="t" style="left:672.00px;top:1191.02px;font-size:16px;color:#000;font-family:'Liberation Sans', sans-serif;transform:scaleX(0.9296);transform-origin:0 0;">50</div>
<div class="t" style="left:672.00px;top:1242.02px;font-size:16px;color:#000;font-family:'Liberation Sans', sans-serif;transform:scaleX(0.9296);transform-origin:0 0;">25</div>
<div class="t" style="left:672.00px;top:1293.02px;font-size:16px;color:#000;font-family:'Liberation Sans', sans-serif;transform:scaleX(0.9577);transform-origin:0 0;">0</div>
<div style="position:absolute;left:819px;top:74px;width:1px;height:1252px;background:#FAFAFA"></div>
<div style="position:absolute;left:825px;top:74px;width:2px;height:1258px;background:#7E7E7E"></div>
<div style="position:absolute;left:830px;top:106px;width:1319px;height:1220px;border:1px solid #DCDCDC;box-sizing:border-box;background:#F0F0F0"></div>
<div style="position:absolute;left:831px;top:106px;width:1317px;height:5px;background:#F7F7F7"></div>
<div style="position:absolute;left:831px;top:80px;width:40px;height:27px;background:#F0F0F0;border:1px solid #E3E3E3;border-bottom:none;box-sizing:border-box"></div>
<div style="position:absolute;left:870px;top:80px;width:55px;height:27px;background:#F0F0F0;border:1px solid #E3E3E3;border-bottom:none;box-sizing:border-box"></div>
<div style="position:absolute;left:924px;top:80px;width:85px;height:27px;background:#F0F0F0;border:1px solid #E3E3E3;border-bottom:none;box-sizing:border-box"></div>
<div style="position:absolute;left:1008px;top:80px;width:58px;height:27px;background:#F0F0F0;border:1px solid #E3E3E3;border-bottom:none;box-sizing:border-box"></div>
<div style="position:absolute;left:1065px;top:80px;width:76px;height:27px;background:#F0F0F0;border:1px solid #E3E3E3;border-bottom:none;box-sizing:border-box"></div>
<div style="position:absolute;left:1263px;top:80px;width:165px;height:27px;background:#F0F0F0;border:1px solid #E3E3E3;border-bottom:none;box-sizing:border-box"></div>
<div style="position:absolute;left:1427px;top:80px;width:40px;height:27px;background:#F0F0F0;border:1px solid #E3E3E3;border-bottom:none;box-sizing:border-box"></div>
<div style="position:absolute;left:1140px;top:77px;width:124px;height:34px;background:#F7F7F7;border:1px solid #E3E3E3;border-bottom:none;box-sizing:border-box"></div>
<div class="t" style="left:838.50px;top:84.31px;font-size:17px;color:#000;font-family:'Liberation Sans', sans-serif;transform:scaleX(0.8840);transform-origin:0 0;">Job</div>
<div class="t" style="left:879.30px;top:84.31px;font-size:17px;color:#000;font-family:'Liberation Sans', sans-serif;transform:scaleX(0.9464);transform-origin:0 0;">Parts</div>
<div class="t" style="left:933.50px;top:84.31px;font-size:17px;color:#000;font-family:'Liberation Sans', sans-serif;transform:scaleX(0.9045);transform-origin:0 0;">Packages</div>
<div class="t" style="left:1017.70px;top:84.31px;font-size:17px;color:#000;font-family:'Liberation Sans', sans-serif;transform:scaleX(0.8696);transform-origin:0 0;">Vision</div>
<div class="t" style="left:1074.30px;top:84.31px;font-size:17px;color:#000;font-family:'Liberation Sans', sans-serif;transform:scaleX(0.9363);transform-origin:0 0;">Feeders</div>
<div class="t" style="left:1148.00px;top:80.91px;font-size:17px;color:#000;font-family:'Liberation Sans', sans-serif;transform:scaleX(0.9261);transform-origin:0 0;">Machine Setup</div>
<div class="t" style="left:1271.70px;top:84.31px;font-size:17px;color:#000;font-family:'Liberation Sans', sans-serif;transform:scaleX(0.9230);transform-origin:0 0;">Issues &amp; Solutions</div>
<div class="t" style="left:1435.80px;top:84.31px;font-size:17px;color:#000;font-family:'Liberation Sans', sans-serif;transform:scaleX(0.8987);transform-origin:0 0;">Log</div>
<svg style="position:absolute;left:1406px;top:87px" width="15" height="15" viewBox="0 0 15 15"><circle cx="7.5" cy="7.3" r="6.6" fill="#0B3FD8"/></svg>
<svg style="position:absolute;left:843px;top:125px" width="21" height="21" viewBox="0 0 21 21"><path d="M3 3 L18 18 M18 3 L3 18" stroke="#D01818" stroke-width="3"/></svg>
<svg style="position:absolute;left:887px;top:123px" width="26" height="26" viewBox="0 0 26 26"><path d="M13 24.5 V2 M2.5 12.5 L13 2 L23.5 12.5" stroke="#000" stroke-width="3" fill="none"/></svg>
<svg style="position:absolute;left:933px;top:123px" width="26" height="26" viewBox="0 0 26 26"><path d="M13 1 V23.5 M2.5 13 L13 23.5 L23.5 13" stroke="#000" stroke-width="3" fill="none"/></svg>
<svg style="position:absolute;left:981px;top:124px" width="24" height="24" viewBox="0 0 24 24"><path d="M12 1 V22 M1 11.5 H22.5" stroke="#4CAF10" stroke-width="3"/></svg>
<div style="position:absolute;left:1801px;top:126.5px;width:19.5px;height:19.5px;background:#0A63CE;border-radius:4px"></div>
<svg style="position:absolute;left:1801px;top:126px" width="20" height="20" viewBox="0 0 20 20"><path d="M5.5 10.5 L8.5 13.5 L14.5 7" stroke="#fff" stroke-width="1.4" fill="none"/></svg>
<div class="t" style="left:1826.00px;top:125.92px;font-size:17px;color:#000;font-family:'Liberation Sans', sans-serif;transform:scaleX(0.9319);transform-origin:0 0;">Expand</div>
<div class="t" style="left:1893.90px;top:125.92px;font-size:17px;color:#000;font-family:'Liberation Sans', sans-serif;transform:scaleX(0.8984);transform-origin:0 0;">Search</div>
<div style="position:absolute;left:1952px;top:121px;width:188px;height:29px;background:#fff;border:1px solid #A7A9AC;box-sizing:border-box"></div>
<div style="position:absolute;left:830px;top:161px;width:1316px;height:319px;background:#fff;border:2px solid #767A80;border-bottom-color:#8C9096;border-right-color:#8C9096;box-sizing:border-box"></div>
<div style="position:absolute;left:2121px;top:163px;width:23px;height:315px;background:#F0F0F0"></div>
<div style="position:absolute;left:2132px;top:372px;width:2px;height:81px;background:#8C8C8C;border-radius:1px"></div>
<svg style="position:absolute;left:0;top:0" width="1200" height="480" viewBox="0 0 1200 480"><rect x="845" y="163" width="1" height="1" fill="#A0A0A0"/><rect x="845" y="165" width="1" height="1" fill="#A0A0A0"/><rect x="845" y="167" width="1" height="1" fill="#A0A0A0"/><rect x="845" y="169" width="1" height="1" fill="#A0A0A0"/><rect x="845" y="171" width="1" height="1" fill="#A0A0A0"/><rect x="845" y="173" width="1" height="1" fill="#A0A0A0"/><rect x="845" y="175" width="1" height="1" fill="#A0A0A0"/><rect x="845" y="177" width="1" height="1" fill="#A0A0A0"/><rect x="845" y="179" width="1" height="1" fill="#A0A0A0"/><rect x="845" y="181" width="1" height="1" fill="#A0A0A0"/><rect x="845" y="183" width="1" height="1" fill="#A0A0A0"/><rect x="845" y="185" width="1" height="1" fill="#A0A0A0"/><rect x="845" y="187" width="1" height="1" fill="#A0A0A0"/><rect x="845" y="189" width="1" height="1" fill="#A0A0A0"/><rect x="845" y="191" width="1" height="1" fill="#A0A0A0"/><rect x="845" y="193" width="1" height="1" fill="#A0A0A0"/><rect x="845" y="195" width="1" height="1" fill="#A0A0A0"/><rect x="845" y="197" width="1" height="1" fill="#A0A0A0"/><rect x="845" y="199" width="1" height="1" fill="#A0A0A0"/><rect x="845" y="201" width="1" height="1" fill="#A0A0A0"/><rect x="845" y="203" width="1" height="1" fill="#A0A0A0"/><rect x="845" y="205" width="1" height="1" fill="#A0A0A0"/><rect x="845" y="207" width="1" height="1" fill="#A0A0A0"/><rect x="845" y="209" width="1" height="1" fill="#A0A0A0"/><rect x="845" y="211" width="1" height="1" fill="#A0A0A0"/><rect x="845" y="213" width="1" height="1" fill="#A0A0A0"/><rect x="845" y="215" width="1" height="1" fill="#A0A0A0"/><rect x="845" y="217" width="1" height="1" fill="#A0A0A0"/><rect x="845" y="219" width="1" height="1" fill="#A0A0A0"/><rect x="845" y="221" width="1" height="1" fill="#A0A0A0"/><rect x="845" y="223" width="1" height="1" fill="#A0A0A0"/><rect x="845" y="225" width="1" height="1" fill="#A0A0A0"/><rect x="845" y="227" width="1" height="1" fill="#A0A0A0"/><rect x="845" y="229" width="1" height="1" fill="#A0A0A0"/><rect x="845" y="231" width="1" height="1" fill="#A0A0A0"/><rect x="845" y="233" width="1" height="1" fill="#A0A0A0"/><rect x="845" y="235" width="1" height="1" fill="#A0A0A0"/><rect x="845" y="237" width="1" height="1" fill="#A0A0A0"/><rect x="845" y="239" width="1" height="1" fill="#A0A0A0"/><rect x="845" y="241" width="1" height="1" fill="#A0A0A0"/><rect x="845" y="243" width="1" height="1" fill="#A0A0A0"/><rect x="845" y="245" width="1" height="1" fill="#A0A0A0"/><rect x="845" y="247" width="1" height="1" fill="#A0A0A0"/><rect x="845" y="249" width="1" height="1" fill="#A0A0A0"/><rect x="845" y="251" width="1" height="1" fill="#A0A0A0"/><rect x="845" y="253" width="1" height="1" fill="#A0A0A0"/><rect x="845" y="255" width="1" height="1" fill="#A0A0A0"/><rect x="845" y="257" width="1" height="1" fill="#A0A0A0"/><rect x="845" y="259" width="1" height="1" fill="#A0A0A0"/><rect x="845" y="261" width="1" height="1" fill="#A0A0A0"/><rect x="845" y="263" width="1" height="1" fill="#A0A0A0"/><rect x="845" y="265" width="1" height="1" fill="#A0A0A0"/><rect x="845" y="267" width="1" height="1" fill="#A0A0A0"/><rect x="845" y="269" width="1" height="1" fill="#A0A0A0"/><rect x="845" y="271" width="1" height="1" fill="#A0A0A0"/><rect x="845" y="273" width="1" height="1" fill="#A0A0A0"/><rect x="845" y="275" width="1" height="1" fill="#A0A0A0"/><rect x="845" y="277" width="1" height="1" fill="#A0A0A0"/><rect x="845" y="279" width="1" height="1" fill="#A0A0A0"/><rect x="845" y="281" width="1" height="1" fill="#A0A0A0"/><rect x="845" y="283" width="1" height="1" fill="#A0A0A0"/><rect x="845" y="285" width="1" height="1" fill="#A0A0A0"/><rect x="845" y="287" width="1" height="1" fill="#A0A0A0"/><rect x="845" y="289" width="1" height="1" fill="#A0A0A0"/><rect x="845" y="291" width="1" height="1" fill="#A0A0A0"/><rect x="845" y="293" width="1" height="1" fill="#A0A0A0"/><rect x="845" y="295" width="1" height="1" fill="#A0A0A0"/><rect x="845" y="297" width="1" height="1" fill="#A0A0A0"/><rect x="845" y="299" width="1" height="1" fill="#A0A0A0"/><rect x="845" y="301" width="1" height="1" fill="#A0A0A0"/><rect x="845" y="303" width="1" height="1" fill="#A0A0A0"/><rect x="845" y="305" width="1" height="1" fill="#A0A0A0"/><rect x="845" y="307" width="1" height="1" fill="#A0A0A0"/><rect x="845" y="309" width="1" height="1" fill="#A0A0A0"/><rect x="845" y="311" width="1" height="1" fill="#A0A0A0"/><rect x="845" y="313" width="1" height="1" fill="#A0A0A0"/><rect x="845" y="315" width="1" height="1" fill="#A0A0A0"/><rect x="845" y="317" width="1" height="1" fill="#A0A0A0"/><rect x="845" y="319" width="1" height="1" fill="#A0A0A0"/><rect x="845" y="321" width="1" height="1" fill="#A0A0A0"/><rect x="845" y="323" width="1" height="1" fill="#A0A0A0"/><rect x="845" y="325" width="1" height="1" fill="#A0A0A0"/><rect x="845" y="327" width="1" height="1" fill="#A0A0A0"/><rect x="845" y="329" width="1" height="1" fill="#A0A0A0"/><rect x="845" y="331" width="1" height="1" fill="#A0A0A0"/><rect x="845" y="333" width="1" height="1" fill="#A0A0A0"/><rect x="845" y="335" width="1" height="1" fill="#A0A0A0"/><rect x="845" y="337" width="1" height="1" fill="#A0A0A0"/><rect x="845" y="339" width="1" height="1" fill="#A0A0A0"/><rect x="845" y="341" width="1" height="1" fill="#A0A0A0"/><rect x="845" y="343" width="1" height="1" fill="#A0A0A0"/><rect x="845" y="345" width="1" height="1" fill="#A0A0A0"/><rect x="845" y="347" width="1" height="1" fill="#A0A0A0"/><rect x="845" y="349" width="1" height="1" fill="#A0A0A0"/><rect x="845" y="351" width="1" height="1" fill="#A0A0A0"/><rect x="845" y="353" width="1" height="1" fill="#A0A0A0"/><rect x="845" y="355" width="1" height="1" fill="#A0A0A0"/><rect x="845" y="357" width="1" height="1" fill="#A0A0A0"/><rect x="845" y="359" width="1" height="1" fill="#A0A0A0"/><rect x="845" y="361" width="1" height="1" fill="#A0A0A0"/><rect x="845" y="363" width="1" height="1" fill="#A0A0A0"/><rect x="845" y="365" width="1" height="1" fill="#A0A0A0"/><rect x="845" y="367" width="1" height="1" fill="#A0A0A0"/><rect x="845" y="369" width="1" height="1" fill="#A0A0A0"/><rect x="845" y="371" width="1" height="1" fill="#A0A0A0"/><rect x="845" y="373" width="1" height="1" fill="#A0A0A0"/><rect x="845" y="375" width="1" height="1" fill="#A0A0A0"/><rect x="845" y="377" width="1" height="1" fill="#A0A0A0"/><rect x="845" y="379" width="1" height="1" fill="#A0A0A0"/><rect x="845" y="381" width="1" height="1" fill="#A0A0A0"/><rect x="845" y="383" width="1" height="1" fill="#A0A0A0"/><rect x="845" y="385" width="1" height="1" fill="#A0A0A0"/><rect x="845" y="387" width="1" height="1" fill="#A0A0A0"/><rect x="845" y="389" width="1" height="1" fill="#A0A0A0"/><rect x="845" y="391" width="1" height="1" fill="#A0A0A0"/><rect x="845" y="393" width="1" height="1" fill="#A0A0A0"/><rect x="845" y="395" width="1" height="1" fill="#A0A0A0"/><rect x="845" y="397" width="1" height="1" fill="#A0A0A0"/><rect x="845" y="399" width="1" height="1" fill="#A0A0A0"/><rect x="845" y="401" width="1" height="1" fill="#A0A0A0"/><rect x="845" y="403" width="1" height="1" fill="#A0A0A0"/><rect x="845" y="405" width="1" height="1" fill="#A0A0A0"/><rect x="845" y="407" width="1" height="1" fill="#A0A0A0"/><rect x="845" y="409" width="1" height="1" fill="#A0A0A0"/><rect x="845" y="411" width="1" height="1" fill="#A0A0A0"/><rect x="845" y="413" width="1" height="1" fill="#A0A0A0"/><rect x="845" y="415" width="1" height="1" fill="#A0A0A0"/><rect x="845" y="417" width="1" height="1" fill="#A0A0A0"/><rect x="845" y="419" width="1" height="1" fill="#A0A0A0"/><rect x="874" y="163" width="1" height="1" fill="#A0A0A0"/><rect x="874" y="165" width="1" height="1" fill="#A0A0A0"/><rect x="874" y="167" width="1" height="1" fill="#A0A0A0"/><rect x="874" y="169" width="1" height="1" fill="#A0A0A0"/><rect x="874" y="171" width="1" height="1" fill="#A0A0A0"/><rect x="874" y="173" width="1" height="1" fill="#A0A0A0"/><rect x="874" y="175" width="1" height="1" fill="#A0A0A0"/><rect x="874" y="177" width="1" height="1" fill="#A0A0A0"/><rect x="874" y="179" width="1" height="1" fill="#A0A0A0"/><rect x="874" y="213" width="1" height="1" fill="#A0A0A0"/><rect x="874" y="215" width="1" height="1" fill="#A0A0A0"/><rect x="874" y="217" width="1" height="1" fill="#A0A0A0"/><rect x="874" y="219" width="1" height="1" fill="#A0A0A0"/><rect x="874" y="221" width="1" height="1" fill="#A0A0A0"/><rect x="874" y="223" width="1" height="1" fill="#A0A0A0"/><rect x="874" y="225" width="1" height="1" fill="#A0A0A0"/><rect x="874" y="227" width="1" height="1" fill="#A0A0A0"/><rect x="874" y="261" width="1" height="1" fill="#A0A0A0"/><rect x="874" y="263" width="1" height="1" fill="#A0A0A0"/><rect x="874" y="265" width="1" height="1" fill="#A0A0A0"/><rect x="874" y="267" width="1" height="1" fill="#A0A0A0"/><rect x="874" y="269" width="1" height="1" fill="#A0A0A0"/><rect x="874" y="271" width="1" height="1" fill="#A0A0A0"/><rect x="874" y="273" width="1" height="1" fill="#A0A0A0"/><rect x="874" y="275" width="1" height="1" fill="#A0A0A0"/><rect x="874" y="277" width="1" height="1" fill="#A0A0A0"/><rect x="874" y="279" width="1" height="1" fill="#A0A0A0"/><rect x="874" y="281" width="1" height="1" fill="#A0A0A0"/><rect x="874" y="283" width="1" height="1" fill="#A0A0A0"/><rect x="874" y="285" width="1" height="1" fill="#A0A0A0"/><rect x="874" y="287" width="1" height="1" fill="#A0A0A0"/><rect x="874" y="289" width="1" height="1" fill="#A0A0A0"/><rect x="874" y="291" width="1" height="1" fill="#A0A0A0"/><rect x="874" y="293" width="1" height="1" fill="#A0A0A0"/><rect x="874" y="295" width="1" height="1" fill="#A0A0A0"/><rect x="874" y="297" width="1" height="1" fill="#A0A0A0"/><rect x="874" y="299" width="1" height="1" fill="#A0A0A0"/><rect x="874" y="333" width="1" height="1" fill="#A0A0A0"/><rect x="874" y="335" width="1" height="1" fill="#A0A0A0"/><rect x="874" y="337" width="1" height="1" fill="#A0A0A0"/><rect x="874" y="339" width="1" height="1" fill="#A0A0A0"/><rect x="874" y="341" width="1" height="1" fill="#A0A0A0"/><rect x="874" y="343" width="1" height="1" fill="#A0A0A0"/><rect x="874" y="345" width="1" height="1" fill="#A0A0A0"/><rect x="874" y="347" width="1" height="1" fill="#A0A0A0"/><rect x="874" y="381" width="1" height="1" fill="#A0A0A0"/><rect x="874" y="383" width="1" height="1" fill="#A0A0A0"/><rect x="874" y="385" width="1" height="1" fill="#A0A0A0"/><rect x="874" y="387" width="1" height="1" fill="#A0A0A0"/><rect x="874" y="389" width="1" height="1" fill="#A0A0A0"/><rect x="874" y="391" width="1" height="1" fill="#A0A0A0"/><rect x="874" y="393" width="1" height="1" fill="#A0A0A0"/><rect x="874" y="395" width="1" height="1" fill="#A0A0A0"/><rect x="874" y="429" width="1" height="1" fill="#A0A0A0"/><rect x="874" y="431" width="1" height="1" fill="#A0A0A0"/><rect x="874" y="433" width="1" height="1" fill="#A0A0A0"/><rect x="874" y="435" width="1" height="1" fill="#A0A0A0"/><rect x="874" y="437" width="1" height="1" fill="#A0A0A0"/><rect x="874" y="439" width="1" height="1" fill="#A0A0A0"/><rect x="874" y="441" width="1" height="1" fill="#A0A0A0"/><rect x="874" y="443" width="1" height="1" fill="#A0A0A0"/><rect x="874" y="445" width="1" height="1" fill="#A0A0A0"/><rect x="874" y="447" width="1" height="1" fill="#A0A0A0"/><rect x="874" y="449" width="1" height="1" fill="#A0A0A0"/><rect x="874" y="451" width="1" height="1" fill="#A0A0A0"/><rect x="874" y="453" width="1" height="1" fill="#A0A0A0"/><rect x="874" y="455" width="1" height="1" fill="#A0A0A0"/><rect x="874" y="457" width="1" height="1" fill="#A0A0A0"/><rect x="874" y="459" width="1" height="1" fill="#A0A0A0"/><rect x="874" y="461" width="1" height="1" fill="#A0A0A0"/><rect x="874" y="463" width="1" height="1" fill="#A0A0A0"/><rect x="874" y="465" width="1" height="1" fill="#A0A0A0"/><rect x="874" y="467" width="1" height="1" fill="#A0A0A0"/><rect x="874" y="179" width="1" height="1" fill="#A0A0A0"/><rect x="876" y="179" width="1" height="1" fill="#A0A0A0"/><rect x="878" y="179" width="1" height="1" fill="#A0A0A0"/><rect x="880" y="179" width="1" height="1" fill="#A0A0A0"/><rect x="882" y="179" width="1" height="1" fill="#A0A0A0"/><rect x="884" y="179" width="1" height="1" fill="#A0A0A0"/><rect x="886" y="179" width="1" height="1" fill="#A0A0A0"/><rect x="852" y="203" width="1" height="1" fill="#A0A0A0"/><rect x="854" y="203" width="1" height="1" fill="#A0A0A0"/><rect x="856" y="203" width="1" height="1" fill="#A0A0A0"/><rect x="858" y="203" width="1" height="1" fill="#A0A0A0"/><rect x="874" y="227" width="1" height="1" fill="#A0A0A0"/><rect x="876" y="227" width="1" height="1" fill="#A0A0A0"/><rect x="878" y="227" width="1" height="1" fill="#A0A0A0"/><rect x="880" y="227" width="1" height="1" fill="#A0A0A0"/><rect x="882" y="227" width="1" height="1" fill="#A0A0A0"/><rect x="884" y="227" width="1" height="1" fill="#A0A0A0"/><rect x="886" y="227" width="1" height="1" fill="#A0A0A0"/><rect x="888" y="227" width="1" height="1" fill="#A0A0A0"/><rect x="890" y="227" width="1" height="1" fill="#A0A0A0"/><rect x="892" y="227" width="1" height="1" fill="#A0A0A0"/><rect x="852" y="251" width="1" height="1" fill="#A0A0A0"/><rect x="854" y="251" width="1" height="1" fill="#A0A0A0"/><rect x="856" y="251" width="1" height="1" fill="#A0A0A0"/><rect x="858" y="251" width="1" height="1" fill="#A0A0A0"/><rect x="874" y="275" width="1" height="1" fill="#A0A0A0"/><rect x="876" y="275" width="1" height="1" fill="#A0A0A0"/><rect x="878" y="275" width="1" height="1" fill="#A0A0A0"/><rect x="880" y="275" width="1" height="1" fill="#A0A0A0"/><rect x="882" y="275" width="1" height="1" fill="#A0A0A0"/><rect x="884" y="275" width="1" height="1" fill="#A0A0A0"/><rect x="886" y="275" width="1" height="1" fill="#A0A0A0"/><rect x="874" y="299" width="1" height="1" fill="#A0A0A0"/><rect x="876" y="299" width="1" height="1" fill="#A0A0A0"/><rect x="878" y="299" width="1" height="1" fill="#A0A0A0"/><rect x="880" y="299" width="1" height="1" fill="#A0A0A0"/><rect x="882" y="299" width="1" height="1" fill="#A0A0A0"/><rect x="884" y="299" width="1" height="1" fill="#A0A0A0"/><rect x="886" y="299" width="1" height="1" fill="#A0A0A0"/><rect x="852" y="323" width="1" height="1" fill="#A0A0A0"/><rect x="854" y="323" width="1" height="1" fill="#A0A0A0"/><rect x="856" y="323" width="1" height="1" fill="#A0A0A0"/><rect x="858" y="323" width="1" height="1" fill="#A0A0A0"/><rect x="874" y="347" width="1" height="1" fill="#A0A0A0"/><rect x="876" y="347" width="1" height="1" fill="#A0A0A0"/><rect x="878" y="347" width="1" height="1" fill="#A0A0A0"/><rect x="880" y="347" width="1" height="1" fill="#A0A0A0"/><rect x="882" y="347" width="1" height="1" fill="#A0A0A0"/><rect x="884" y="347" width="1" height="1" fill="#A0A0A0"/><rect x="886" y="347" width="1" height="1" fill="#A0A0A0"/><rect x="888" y="347" width="1" height="1" fill="#A0A0A0"/><rect x="890" y="347" width="1" height="1" fill="#A0A0A0"/><rect x="892" y="347" width="1" height="1" fill="#A0A0A0"/><rect x="852" y="371" width="1" height="1" fill="#A0A0A0"/><rect x="854" y="371" width="1" height="1" fill="#A0A0A0"/><rect x="856" y="371" width="1" height="1" fill="#A0A0A0"/><rect x="858" y="371" width="1" height="1" fill="#A0A0A0"/><rect x="874" y="395" width="1" height="1" fill="#A0A0A0"/><rect x="876" y="395" width="1" height="1" fill="#A0A0A0"/><rect x="878" y="395" width="1" height="1" fill="#A0A0A0"/><rect x="880" y="395" width="1" height="1" fill="#A0A0A0"/><rect x="882" y="395" width="1" height="1" fill="#A0A0A0"/><rect x="884" y="395" width="1" height="1" fill="#A0A0A0"/><rect x="886" y="395" width="1" height="1" fill="#A0A0A0"/><rect x="852" y="419" width="1" height="1" fill="#A0A0A0"/><rect x="854" y="419" width="1" height="1" fill="#A0A0A0"/><rect x="856" y="419" width="1" height="1" fill="#A0A0A0"/><rect x="858" y="419" width="1" height="1" fill="#A0A0A0"/><rect x="874" y="443" width="1" height="1" fill="#A0A0A0"/><rect x="876" y="443" width="1" height="1" fill="#A0A0A0"/><rect x="878" y="443" width="1" height="1" fill="#A0A0A0"/><rect x="880" y="443" width="1" height="1" fill="#A0A0A0"/><rect x="882" y="443" width="1" height="1" fill="#A0A0A0"/><rect x="884" y="443" width="1" height="1" fill="#A0A0A0"/><rect x="886" y="443" width="1" height="1" fill="#A0A0A0"/><rect x="874" y="467" width="1" height="1" fill="#A0A0A0"/><rect x="876" y="467" width="1" height="1" fill="#A0A0A0"/><rect x="878" y="467" width="1" height="1" fill="#A0A0A0"/><rect x="880" y="467" width="1" height="1" fill="#A0A0A0"/><rect x="882" y="467" width="1" height="1" fill="#A0A0A0"/><rect x="884" y="467" width="1" height="1" fill="#A0A0A0"/><rect x="886" y="467" width="1" height="1" fill="#A0A0A0"/></svg>
<div class="t" style="left:889.00px;top:169.62px;font-size:17px;color:#000;font-family:'Liberation Sans', sans-serif;transform:scaleX(0.9247);transform-origin:0 0;">ReferenceNozzleTip N75</div>
<div style="position:absolute;left:839px;top:196.5px;width:13px;height:13px;border:1px solid #8E8E8E;box-sizing:border-box;background:linear-gradient(#fff,#E6E6E6)"></div>
<div style="position:absolute;left:842px;top:202.5px;width:7px;height:1.2px;background:#4A5AA8"></div>
<div class="t" style="left:860.00px;top:193.62px;font-size:17px;color:#000;font-family:'Liberation Sans', sans-serif;transform:scaleX(0.9174);transform-origin:0 0;">Cameras</div>
<div class="t" style="left:930.60px;top:217.62px;font-size:17px;color:#000;font-family:'Liberation Sans', sans-serif;transform:scaleX(0.9361);transform-origin:0 0;">OpenPnpCaptureCamera Bottom</div>
<div style="position:absolute;left:839px;top:244.5px;width:13px;height:13px;border:1px solid #8E8E8E;box-sizing:border-box;background:linear-gradient(#fff,#E6E6E6)"></div>
<div style="position:absolute;left:842px;top:250.5px;width:7px;height:1.2px;background:#4A5AA8"></div>
<div class="t" style="left:860.00px;top:241.62px;font-size:17px;color:#000;font-family:'Liberation Sans', sans-serif;transform:scaleX(0.9781);transform-origin:0 0;">Actuators</div>
<div class="t" style="left:889.00px;top:265.62px;font-size:17px;color:#000;font-family:'Liberation Sans', sans-serif;transform:scaleX(0.9398);transform-origin:0 0;">ReferenceActuator LED</div>
<div class="t" style="left:889.00px;top:289.62px;font-size:17px;color:#000;font-family:'Liberation Sans', sans-serif;transform:scaleX(0.9681);transform-origin:0 0;">ReferenceActuator IndexFeederData</div>
<div style="position:absolute;left:839px;top:316.5px;width:13px;height:13px;border:1px solid #8E8E8E;box-sizing:border-box;background:linear-gradient(#fff,#E6E6E6)"></div>
<div style="position:absolute;left:842px;top:322.5px;width:7px;height:1.2px;background:#4A5AA8"></div>
<div class="t" style="left:860.00px;top:313.62px;font-size:17px;color:#000;font-family:'Liberation Sans', sans-serif;transform:scaleX(0.9318);transform-origin:0 0;">Drivers</div>
<div style="position:absolute;left:930px;top:335.3px;width:188px;height:23.5px;background:#0078D7"></div>
<div class="t" style="left:930.60px;top:337.62px;font-size:17px;color:#fff;font-family:'Liberation Sans', sans-serif;transform:scaleX(0.9196);transform-origin:0 0;">GcodeDriver GcodeDriver</div>
<div style="position:absolute;left:839px;top:364.5px;width:13px;height:13px;border:1px solid #8E8E8E;box-sizing:border-box;background:linear-gradient(#fff,#E6E6E6)"></div>
<div style="position:absolute;left:842px;top:370.5px;width:7px;height:1.2px;background:#4A5AA8"></div>
<div class="t" style="left:860.00px;top:361.62px;font-size:17px;color:#000;font-family:'Liberation Sans', sans-serif;transform:scaleX(0.9136);transform-origin:0 0;">Job Processors</div>
<div class="t" style="left:889.00px;top:385.62px;font-size:17px;color:#000;font-family:'Liberation Sans', sans-serif;transform:scaleX(0.9251);transform-origin:0 0;">ReferencePnpJobProcessor</div>
<div style="position:absolute;left:839px;top:412.5px;width:13px;height:13px;border:1px solid #8E8E8E;box-sizing:border-box;background:linear-gradient(#fff,#E6E6E6)"></div>
<div style="position:absolute;left:842px;top:418.5px;width:7px;height:1.2px;background:#4A5AA8"></div>
<div class="t" style="left:860.00px;top:409.62px;font-size:17px;color:#000;font-family:'Liberation Sans', sans-serif;transform:scaleX(0.8652);transform-origin:0 0;">Vision</div>
<div class="t" style="left:889.00px;top:433.62px;font-size:17px;color:#000;font-family:'Liberation Sans', sans-serif;transform:scaleX(0.9070);transform-origin:0 0;">Bottom Vision</div>
<div class="t" style="left:889.00px;top:457.62px;font-size:17px;color:#000;font-family:'Liberation Sans', sans-serif;transform:scaleX(0.9204);transform-origin:0 0;">Fiducal Locator</div>
<svg style="position:absolute;left:893px;top:214px" width="28" height="25" viewBox="0 0 28 25"><path d="M1.5 8 V1.5 H8 M20 1.5 H26.5 V8 M26.5 17 V23.5 H20 M8 23.5 H1.5 V17" stroke="#1A5FD0" stroke-width="2.6" fill="none"/><circle cx="14" cy="12.5" r="5" stroke="#1A5FD0" stroke-width="2.6" fill="none"/></svg>
<svg style="position:absolute;left:895.5px;top:336px" width="24" height="23" viewBox="0 0 24 23"><path d="M11 0.5 L13.2 0.5 L13.8 3.6 A8 8 0 0 1 16.4 4.7 L19 2.9 L20.6 4.5 L18.8 7.1 A8 8 0 0 1 19.9 9.7 L23 10.3 L23 12.5 L19.9 13.1 A8 8 0 0 1 18.8 15.7 L20.6 18.3 L19 19.9 L16.4 18.1 A8 8 0 0 1 13.8 19.2 L13.2 22.3 L11 22.3 L10.4 19.2 A8 8 0 0 1 7.8 18.1 L5.2 19.9 L3.6 18.3 L5.4 15.7 A8 8 0 0 1 4.3 13.1 L1.2 12.5 L1.2 10.3 L4.3 9.7 A8 8 0 0 1 5.4 7.1 L3.6 4.5 L5.2 2.9 L7.8 4.7 A8 8 0 0 1 10.4 3.6 Z" fill="#1A5FD0"/><circle cx="12.1" cy="11.4" r="3.6" fill="#fff"/></svg>
<div style="position:absolute;left:830px;top:487px;width:1318px;height:839px;border-top:1px solid #767676;border-left:1px solid #9A9A9A;box-sizing:border-box"></div>
<div style="position:absolute;left:834px;top:520px;width:1308px;height:803px;border:1px solid #DCDCDC;box-sizing:border-box"></div>
<div style="position:absolute;left:835px;top:520px;width:1306px;height:4px;background:#F7F7F7"></div>
<div style="position:absolute;left:834px;top:494px;width:114px;height:27px;background:#F0F0F0;border:1px solid #E3E3E3;border-bottom:none;box-sizing:border-box"></div>
<div style="position:absolute;left:947px;top:494px;width:123px;height:27px;background:#F0F0F0;border:1px solid #E3E3E3;border-bottom:none;box-sizing:border-box"></div>
<div style="position:absolute;left:1132px;top:494px;width:71px;height:27px;background:#F0F0F0;border:1px solid #E3E3E3;border-bottom:none;box-sizing:border-box"></div>
<div style="position:absolute;left:1068px;top:491px;width:65px;height:33px;background:#F7F7F7;border:1px solid #E3E3E3;border-bottom:none;box-sizing:border-box"></div>
<div class="t" style="left:842.30px;top:498.12px;font-size:17px;color:#000;font-family:'Liberation Sans', sans-serif;transform:scaleX(0.9562);transform-origin:0 0;">Configuration</div>
<div class="t" style="left:955.60px;top:498.12px;font-size:17px;color:#000;font-family:'Liberation Sans', sans-serif;transform:scaleX(0.9543);transform-origin:0 0;">Driver Settings</div>
<div class="t" style="left:1077.80px;top:495.01px;font-size:17px;color:#000;font-family:'Liberation Sans', sans-serif;transform:scaleX(0.8858);transform-origin:0 0;">Gcode</div>
<div class="t" style="left:1140.80px;top:498.12px;font-size:17px;color:#000;font-family:'Liberation Sans', sans-serif;transform:scaleX(0.9010);transform-origin:0 0;">Console</div>
<div style="position:absolute;left:838px;top:535px;width:1301px;height:400px;border:1px solid #DCDCDC;box-sizing:border-box"></div>
<div style="position:absolute;left:843px;top:525px;width:52px;height:20px;background:#F0F0F0"></div>
<div class="t" style="left:846.70px;top:526.51px;font-size:17px;color:#000;font-family:'Liberation Sans', sans-serif;transform:scaleX(0.8798);transform-origin:0 0;">Gcode</div>
<div class="t" style="left:851.50px;top:559.82px;font-size:17px;color:#000;font-family:'Liberation Sans', sans-serif;transform:scaleX(0.9315);transform-origin:0 0;">Head Mountable</div>
<div style="position:absolute;left:852px;top:589px;width:644px;height:29px;background:#FDFDFD;border:1px solid #A7A9AC;box-sizing:border-box"></div>
<div class="t" style="left:857.50px;top:593.91px;font-size:17px;color:#000;font-family:'Liberation Sans', sans-serif;transform:scaleX(0.9800);transform-origin:0 0;">Default</div>
<svg style="position:absolute;left:1474px;top:598px" width="18" height="12" viewBox="0 0 18 12"><path d="M2.5 2.5 L9 9 L15.5 2.5" stroke="#555" stroke-width="1.3" fill="none"/></svg>
<div class="t" style="left:1508.30px;top:559.72px;font-size:17px;color:#000;font-family:'Liberation Sans', sans-serif;transform:scaleX(0.9532);transform-origin:0 0;">Setting</div>
<div style="position:absolute;left:1510px;top:589px;width:622px;height:29px;background:#E5F1FB;border:1px solid #B5C9E0;box-sizing:border-box"></div>
<div style="position:absolute;left:1511.5px;top:593px;width:591px;height:21px;border:1px dotted #222;box-sizing:border-box"></div>
<div class="t" style="left:1514.00px;top:594.32px;font-size:17px;color:#000;font-family:'Liberation Sans', sans-serif;transform:scaleX(0.8720);transform-origin:0 0;">MOVE_TO_COMMAND</div>
<svg style="position:absolute;left:2109px;top:599px" width="18" height="12" viewBox="0 0 18 12"><path d="M2.5 2.5 L9 9 L15.5 2.5" stroke="#555" stroke-width="1.3" fill="none"/></svg>
<div style="position:absolute;left:852px;top:628px;width:1281px;height:302px;background:#fff;border:1px solid #A7A9AC;box-sizing:border-box"></div>
<div class="t" style="left:857.8px;top:635.20px;font-size:20px;color:#3a3a3a;font-family:'Liberation Mono', monospace;transform:scaleY(0.88);transform-origin:0 18.1px">G0 {X:X%.4f} {Y:Y%.4f} {Z:Z%.4f} {A:A%.4f} {B:B%.4f} F{FeedRate:%.0f} ; Send standard Gcode move</div>
<div style="position:absolute;left:838px;top:951px;width:1301px;height:314px;border:1px solid #DCDCDC;box-sizing:border-box"></div>
<div style="position:absolute;left:843px;top:941px;width:120px;height:20px;background:#F0F0F0"></div>
<div class="t" style="left:846.40px;top:942.62px;font-size:17px;color:#000;font-family:'Liberation Sans', sans-serif;transform:scaleX(1.0009);transform-origin:0 0;">Import / Export</div>
<div style="position:absolute;left:854px;top:976px;width:264px;height:46px;background:#FDFDFD;border:1px solid #D3D3D3;box-sizing:border-box;border-radius:5px;"></div>
<div style="position:absolute;left:854px;top:1035px;width:264px;height:46px;background:#FDFDFD;border:1px solid #D3D3D3;box-sizing:border-box;border-radius:5px;"></div>
<svg style="position:absolute;left:908px;top:984px" width="23" height="27" viewBox="0 0 23 27"><path d="M11.5 1 L22 12 H16 V21 H7 V12 H1 Z" fill="#57A80F"/><rect x="1" y="23.5" width="21" height="2.6" fill="#57A80F"/></svg>
<div class="t" style="left:942.20px;top:988.82px;font-size:17px;color:#000;font-family:'Liberation Sans', sans-serif;transform:scaleX(0.9300);transform-origin:0 0;">Export Gcode File</div>
<svg style="position:absolute;left:881px;top:1043px" width="25" height="27" viewBox="0 0 25 27"><path d="M2 20 V2 H15" stroke="#6CC04A" stroke-width="2.6" fill="none"/><rect x="7.5" y="8" width="15.5" height="17.5" stroke="#6CC04A" stroke-width="2.6" fill="none"/></svg>
<div class="t" style="left:917.10px;top:1046.91px;font-size:17px;color:#000;font-family:'Liberation Sans', sans-serif;transform:scaleX(0.9331);transform-origin:0 0;">Copy Gcode to Clipboard</div>
<div style="position:absolute;left:1950px;top:1282px;width:87px;height:29px;background:#F5F5F5;border:1px solid #E3E3E3;box-sizing:border-box;border-radius:5px"></div>
<div style="position:absolute;left:2049px;top:1282px;width:84px;height:29px;background:#F5F5F5;border:1px solid #E3E3E3;box-sizing:border-box;border-radius:5px"></div>
<div class="t" style="left:1970.00px;top:1286.12px;font-size:17px;color:#8A8A8A;font-family:'Liberation Sans', sans-serif;transform:scaleX(0.9465);transform-origin:0 0;">Reset</div>
<div class="t" style="left:2069.40px;top:1286.12px;font-size:17px;color:#8A8A8A;font-family:'Liberation Sans', sans-serif;transform:scaleX(0.9553);transform-origin:0 0;">Apply</div>
<svg style="position:absolute;left:0;top:0" width="2160" height="1369" viewBox="0 0 2160 1369"><rect x="1491" y="544.5" width="646" height="81.5" rx="6" fill="none" stroke="#FF0000" stroke-width="8"/><polygon points="1633.7,661.2 1614.3,707.9 1611,696 1298.2,1054.8 1291.8,1049.2 1603.8,689.5 1590.7,686.8" fill="#FF0000"/><path d="M1733.5 610 V631 L1738.5 626 L1742.5 636 L1746 634.5 L1742 625 H1748.5 Z" fill="#fff" stroke="#000" stroke-width="1.2"/></svg>
<div style="position:absolute;left:9px;top:1334px;width:893px;height:25px;border-top:2px solid #8A8A8A;border-left:2px solid #8A8A8A;border-bottom:1px solid #fff;border-right:1px solid #fff;box-sizing:border-box"></div>
<div style="position:absolute;left:925px;top:1334px;width:339px;height:25px;border-top:2px solid #8A8A8A;border-left:2px solid #8A8A8A;border-bottom:1px solid #fff;border-right:1px solid #fff;box-sizing:border-box"></div>
<div class="t" style="left:930.30px;top:1337.02px;font-size:17px;color:#000;font-family:'Liberation Sans', sans-serif;transform:scaleX(0.9561);transform-origin:0 0;">Placements: 0 / 0 Total | 0 / 0 Selected Board</div>
<div style="position:absolute;left:1273px;top:1335px;width:300px;height:21px;background:#E6E6E6;border:1px solid #BCBCBC;box-sizing:border-box"></div>
<div style="position:absolute;left:1274px;top:1336px;width:3px;height:19px;background:#0A6CD9"></div>
<div class="t" style="left:1409.30px;top:1334.82px;font-size:16px;color:#2B6FD6;font-family:'Liberation Sans', sans-serif;transform:scaleX(1.0681);transform-origin:0 0;">0%</div>
<div style="position:absolute;left:1583px;top:1331px;width:570px;height:30px;background:#BBFFBB;border-top:3px solid #6A926A;border-left:2px solid #6A926A;border-bottom:3px solid #fff;border-right:3px solid #fff;box-sizing:border-box"></div>
<div class="t" style="left:1584px;top:1336.40px;font-size:20px;color:#2a2a2a;font-family:'Liberation Mono', monospace;letter-spacing:0.05px;transform:scaleY(0.9);transform-origin:0 18.1px">X:164.604   Y:113.695   Z:31.500    C:200.000</div>
<div style="position:absolute;left:0px;top:1367px;width:2160px;height:2px;background:#1B3A66"></div>
</body></html>
